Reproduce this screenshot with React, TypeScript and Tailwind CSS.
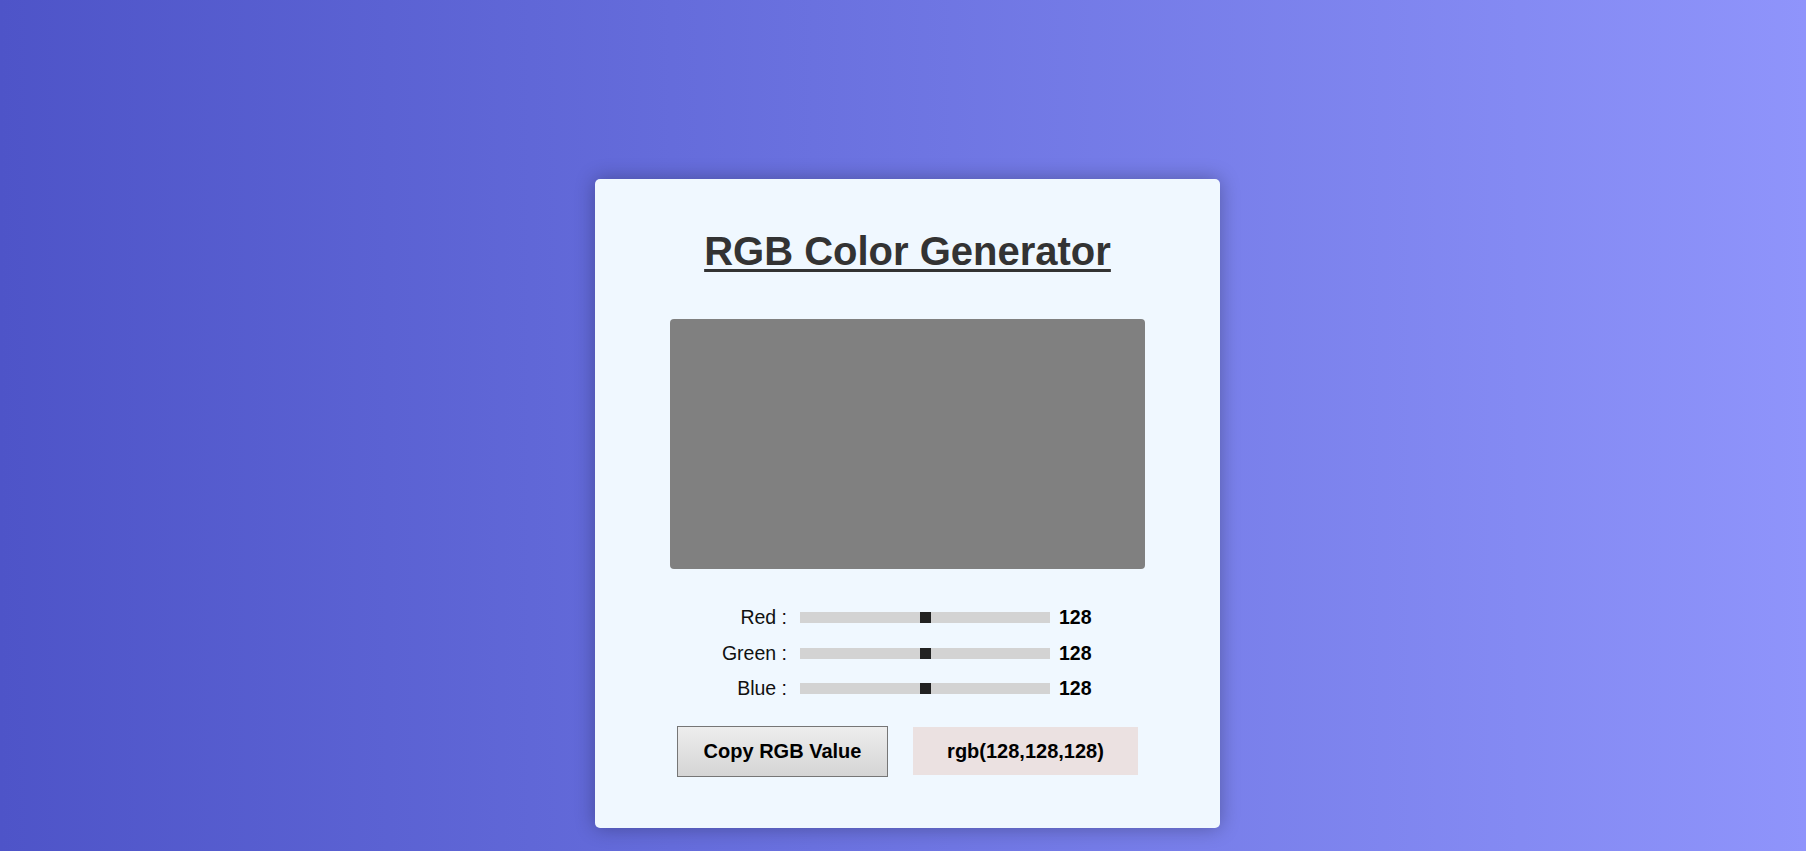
import React, { useState } from 'react';

const channels = ['Red', 'Green', 'Blue'] as const;

const App = () => {
  const [rgb, setRgb] = useState<Record<string, number>>({ Red: 128, Green: 128, Blue: 128 });
  const value = `rgb(${rgb.Red},${rgb.Green},${rgb.Blue})`;

  return (
    <div className="min-h-screen bg-linear-to-r from-[#4e54c8] to-[#8f94fb] pt-[179px] pl-[9px] flex justify-center items-start font-['Liberation_Sans',Arial,sans-serif]">
      {/* Card */}
      <div className="w-[625px] bg-[#f0f8ff] rounded-[5px] shadow-[0_0_20px_rgba(0,0,0,0.3)] pt-[52px] pb-[51px] flex flex-col items-center">
        <h1 className="text-[40px] leading-none font-bold text-[#333] underline decoration-[3px] underline-offset-[4px]">
          RGB Color Generator
        </h1>

        {/* Preview */}
        <div className="mt-[48px] w-[475px] h-[250px] rounded-[4px]" style={{ backgroundColor: value }} />

        {/* Sliders */}
        <div className="mt-[31px] flex flex-col">
          {channels.map((c) => (
            <div key={c} className="h-[35.5px] flex items-center text-[19.5px] text-[#111]">
              <label className="w-[80px] text-right mr-[13px]">{c} :</label>
              <input
                type="range"
                min={0}
                max={255}
                value={rgb[c]}
                onChange={(e) => setRgb({ ...rgb, [c]: Number(e.target.value) })}
                className="appearance-none w-[250px] h-[11px] bg-[#d3d3d3] outline-none cursor-pointer [&::-webkit-slider-thumb]:appearance-none [&::-webkit-slider-thumb]:w-[11px] [&::-webkit-slider-thumb]:h-[11px] [&::-webkit-slider-thumb]:bg-[#222] [&::-webkit-slider-thumb]:border-0 [&::-webkit-slider-thumb]:rounded-none"
              />
              <span className="ml-[9px] w-[49px] font-bold text-black">{rgb[c]}</span>
            </div>
          ))}
        </div>

        {/* Actions */}
        <div className="mt-[19px] flex items-center gap-[25px]">
          <button
            onClick={() => navigator.clipboard?.writeText(value)}
            className="w-[211px] h-[51px] border border-[#767676] bg-linear-to-b from-[#ededed] to-[#d5d5d5] text-[20px] font-bold text-black"
          >
            Copy RGB Value
          </button>
          <div className="w-[225px] h-[48px] bg-[#ebe1e1] flex items-center justify-center text-[20px] font-bold text-black">
            {value}
          </div>
        </div>
      </div>
    </div>
  );
};

export default App;
